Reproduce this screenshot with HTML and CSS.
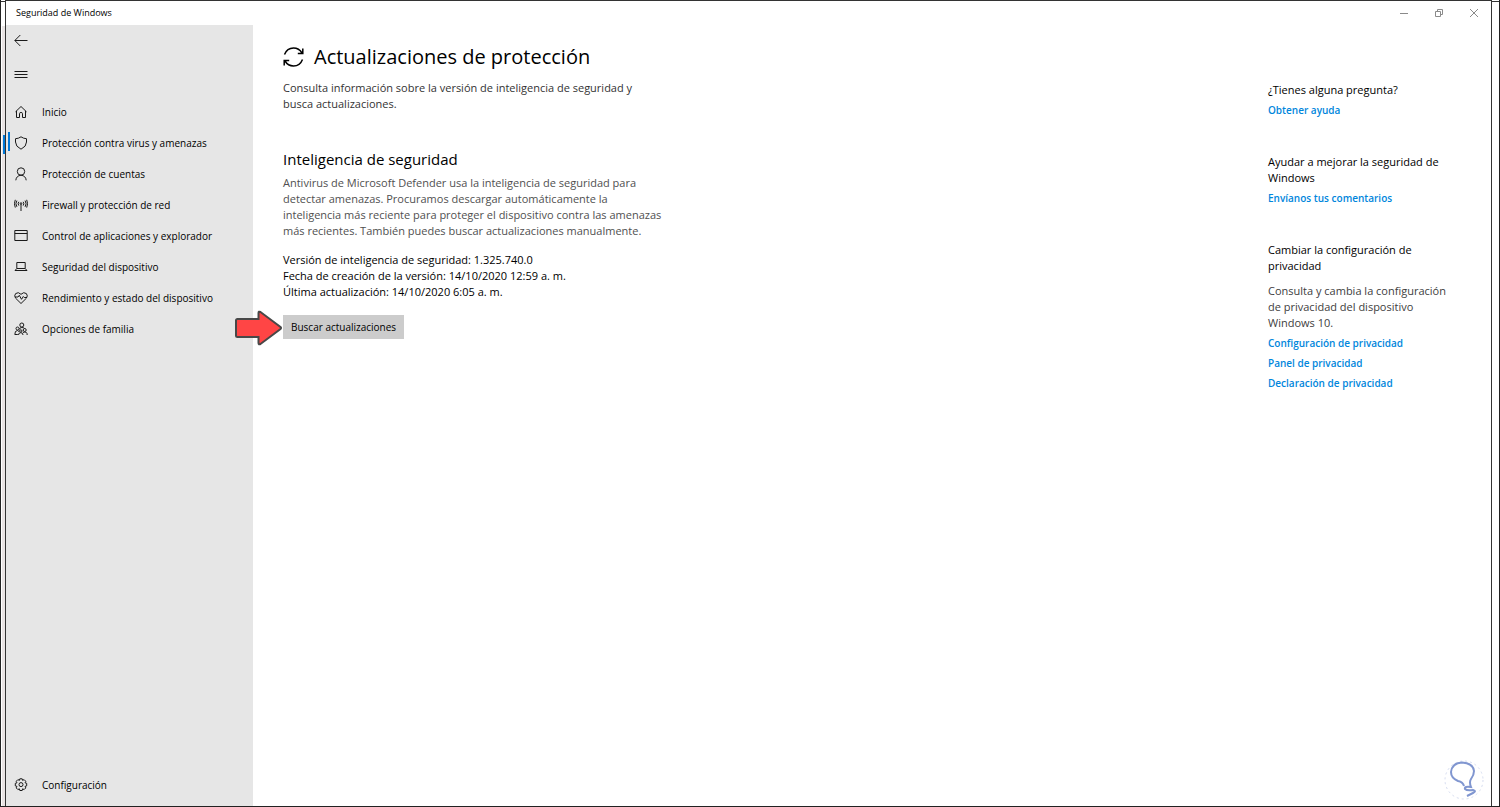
FILE: index.html
```html
<!DOCTYPE html>
<html lang="es">
<head>
    <meta charset="UTF-8">
    <meta name="viewport" content="width=device-width, initial-scale=1.0">
    <title>Seguridad de Windows</title>
    <link rel="stylesheet" href="styles.css">
</head>
<body>
    <div class="backdrop">
        <div class="window">
            <header class="titlebar">
                <span class="app-name">Seguridad de Windows</span>
                <div class="controls">
                    <button type="button" aria-label="Minimizar"><svg width="10" height="10" viewBox="0 0 10 10"><path d="M1 5.5h8"/></svg></button>
                    <button type="button" aria-label="Restaurar"><svg width="10" height="10" viewBox="0 0 10 10"><path d="M1.5 3.5h5v5h-5zM3.5 3.5v-2h5v5h-2"/></svg></button>
                    <button type="button" aria-label="Cerrar"><svg width="10" height="10" viewBox="0 0 10 10"><path d="M1 1l8 8M9 1l-8 8"/></svg></button>
                </div>
            </header>

            <div class="content">
                <aside class="sidebar">
                    <button type="button" class="nav-item" aria-label="Atrás">
                        <svg width="14" height="14" viewBox="0 0 14 14"><path d="M13.5 6.500H1M6.300 1L.8 6.500l5.500 5.500"/></svg>
                    </button>
                    <button type="button" class="nav-item menu" aria-label="Menú">
                        <svg width="14" height="14" viewBox="0 0 14 14"><path d="M.5 3.500h13M.5 6.500h13M.5 9.500h13"/></svg>
                    </button>
                    <nav>
                        <a href="#" class="nav-item">
                            <svg width="14" height="14" viewBox="0 0 14 14"><path d="M1.500 6.800L7 1.500l5.500 5.300M2.500 6v6.500h3v-4q0-1 1.500-1t1.500 1v4h3V6"/></svg>
                            Inicio
                        </a>
                        <a href="#" class="nav-item active">
                            <svg width="14" height="14" viewBox="0 0 14 14"><path d="M7 .8Q9.500 2.600 12.500 2.700V6Q12.500 10.600 7 13.200Q1.500 10.600 1.500 6V2.700Q4.500 2.600 7 .8z"/></svg>
                            Protección contra virus y amenazas
                        </a>
                        <a href="#" class="nav-item">
                            <svg width="14" height="14" viewBox="0 0 14 14"><circle cx="7" cy="4.500" r="3.700"/><path d="M1.800 13.300Q2.300 8.700 7 8.200Q11.700 8.700 12.200 13.300"/></svg>
                            Protección de cuentas
                        </a>
                        <a href="#" class="nav-item">
                            <svg class="thin" width="14" height="14" viewBox="0 0 14 14"><path d="M7 6v7M4.800 3.800q-1.300 1.900 0 3.800M9.200 3.800q1.300 1.900 0 3.800M2.900 2.600q-2 3.100 0 6.200M11.100 2.600q2 3.100 0 6.200M1.300 1.800q-1.800 3.900 0 7.800M12.700 1.800q1.800 3.900 0 7.800"/><circle cx="7" cy="5.500" r=".8"/></svg>
                            Firewall y protección de red
                        </a>
                        <a href="#" class="nav-item">
                            <svg width="14" height="14" viewBox="0 0 14 14"><path d="M.8 1.500h12.400v10H.8zM.8 4.500h12.400"/></svg>
                            Control de aplicaciones y explorador
                        </a>
                        <a href="#" class="nav-item">
                            <svg width="14" height="14" viewBox="0 0 14 14"><path d="M2.800 2.500h8.400v6H2.800zM2.800 8.500L1 10.500h12l-1.800-2"/></svg>
                            Seguridad del dispositivo
                        </a>
                        <a href="#" class="nav-item">
                            <svg width="14" height="14" viewBox="0 0 14 14"><path d="M7 12.500L1.600 7.200Q-.2 4.800 1.600 2.600Q4.300.4 7 3.300Q9.700.4 12.400 2.600Q14.200 4.800 12.400 7.200zM1 6h3l1.300-1.700 2.200 4L9.300 5.500l1 1H13"/></svg>
                            Rendimiento y estado del dispositivo
                        </a>
                        <a href="#" class="nav-item">
                            <svg width="14" height="14" viewBox="0 0 14 14"><circle cx="7.800" cy="3" r="2"/><circle cx="3.500" cy="6.500" r="1.500"/><circle cx="10.700" cy="8" r="1.500"/><circle cx="6.800" cy="9" r="1.200"/><path d="M5.300 7.500Q5.500 5.500 7.800 5.500T10.500 6.500M.8 12.500Q.8 8.500 3.500 8.500L5 9.500M4.500 13Q4.500 10.700 6.800 10.700T9 13M9 10.500Q13.200 8.800 13.200 13M.8 12.500h3"/></svg>
                            Opciones de familia
                        </a>
                    </nav>
                    <a href="#" class="nav-item settings">
                        <svg width="14" height="14" viewBox="0 0 14 14"><path d="M5.800.8h2.400l.4 1.600 1.500-.8 1.700 1.700-.8 1.500 1.700.5v2.600l-1.700.5.8 1.500-1.700 1.700-1.500-.8-.4 1.700H5.800l-.4-1.700-1.500.8-1.700-1.700.8-1.500-1.700-.5V5.300L3 4.800l-.8-1.500 1.700-1.700 1.500.8z"/><circle cx="7" cy="6.600" r="2"/></svg>
                        Configuración
                    </a>
                </aside>

                <main>
                    <h1>
                        <svg width="21" height="21" viewBox="0 0 21 21"><path d="M1.500 7.500Q4 1 10.500 1Q16 1 19 6M19.800 1.500v5h-5M19.500 12.500Q17 19 10.500 19Q5 19 2 14M1.200 18.500v-5h5"/></svg>
                        Actualizaciones de protección
                    </h1>
                    <p class="intro">Consulta información sobre la versión de inteligencia de seguridad y<br>busca actualizaciones.</p>

                    <h2>Inteligencia de seguridad</h2>
                    <p class="description">Antivirus de Microsoft Defender usa la inteligencia de seguridad para<br>detectar amenazas. Procuramos descargar automáticamente la<br>inteligencia más reciente para proteger el dispositivo contra las amenazas<br>más recientes. También puedes buscar actualizaciones manualmente.</p>
                    <p class="version">Versión de inteligencia de seguridad: 1.325.740.0<br>Fecha de creación de la versión: 14/10/2020 12:59 a. m.<br>Última actualización: 14/10/2020 6:05 a. m.</p>

                    <div class="action">
                        <svg class="arrow" width="48" height="36" viewBox="0 0 48 36"><path d="M2.500 9H23.500V3Q23.500 1 25.500 2L45.500 17Q46.500 18 45.500 19L25.500 34Q23.500 35 23.500 33V27H2.500Q1 27 1 25.500V10.500Q1 9 2.500 9z"/></svg>
                        <button type="button" class="update">Buscar actualizaciones</button>
                    </div>
                </main>

                <aside class="help">
                    <section>
                        <h3>¿Tienes alguna pregunta?</h3>
                        <a href="#">Obtener ayuda</a>
                    </section>
                    <section>
                        <h3>Ayudar a mejorar la seguridad de<br>Windows</h3>
                        <a href="#">Envíanos tus comentarios</a>
                    </section>
                    <section>
                        <h3>Cambiar la configuración de<br>privacidad</h3>
                        <p>Consulta y cambia la configuración<br>de privacidad del dispositivo<br>Windows 10.</p>
                        <a href="#">Configuración de privacidad</a>
                        <a href="#">Panel de privacidad</a>
                        <a href="#">Declaración de privacidad</a>
                    </section>
                </aside>
            </div>

            <svg class="logo" width="42" height="42" viewBox="0 0 42 42">
                <circle class="ring" cx="20" cy="21" r="19"/>
                <path d="M20 27Q19 23 14 22Q7 19 7 13Q8 4 18 3.500Q29 4 30 12Q30 16 27 20Q25 23 27 28Q20 27 21 30Q23 32 29 31Q33 32 29 34L23 37"/>
            </svg>
        </div>
    </div>
</body>
</html>
```

FILE: styles.css
```css
* {
    box-sizing: border-box;
}
body {
    margin: 0;
    background-color: #ffffff;
    color: #000000;
    font-family: "Segoe UI", "Open Sans", sans-serif;
    font-size: 11px;
    line-height: 16px;
}
h1, h2, h3, p {
    margin: 0;
    font-size: 11px;
    font-weight: 400;
}
button {
    border: none;
    background: none;
    color: inherit;
    font: inherit;
}
a {
    color: inherit;
    text-decoration: none;
}
svg {
    flex: none;
    fill: none;
    stroke: #1a1a1a;
    stroke-width: 1;
}

/* window left open behind the main one */
.backdrop {
    position: relative;
    min-height: 100vh;
    padding: 0 7px 0 4px;
    border: 1px solid #222222;
    border-top: none;
    background: linear-gradient(#333333, #333333) 0 1px / 100% 1px no-repeat,
        linear-gradient(#e9e4e4, #e9e4e4) 1px 26px / 3px 100% no-repeat;
    display: flex;
}
.backdrop::before {
    content: "";
    position: absolute;
    left: 2px;
    top: 135px;
    width: 2px;
    height: 19px;
    background-color: #0078d7;
}
.window {
    position: relative;
    flex: 1;
    display: flex;
    flex-direction: column;
    border: 1px solid #333333;
    border-bottom: none;
    background-color: #ffffff;
}

.titlebar {
    display: flex;
    justify-content: space-between;
    align-items: center;
    height: 24px;
    padding-left: 10px;
    font-size: 9px;
}
.controls {
    display: flex;
}
.controls button {
    display: flex;
    justify-content: center;
    align-items: center;
    width: 35px;
    height: 24px;
    padding: 0;
}
.controls svg {
    stroke: #8a8a8a;
}

.content {
    flex: 1;
    display: flex;
}
.sidebar {
    flex: none;
    display: flex;
    flex-direction: column;
    width: 247px;
    padding-bottom: 6px;
    background-color: #e6e6e6;
    font-size: 10px;
    font-weight: 500;
}
.nav-item {
    position: relative;
    display: flex;
    align-items: center;
    gap: 14px;
    height: 31px;
    padding: 0 8px;
}
.menu {
    margin: 3px 0 6px;
}
.active::before {
    content: "";
    position: absolute;
    left: 2px;
    top: 5px;
    width: 2px;
    height: 19px;
    background-color: #0078d7;
}
.settings {
    margin-top: auto;
}

main {
    flex: 1;
    padding: 16px 30px;
}
h1 {
    display: flex;
    align-items: center;
    gap: 10px;
    font-size: 20px;
    line-height: 32px;
}
h1 svg {
    stroke: #000000;
    stroke-width: 1.5;
}
.intro {
    margin-top: 7px;
    color: #333333;
}
h2 {
    margin-top: 37px;
    font-size: 15px;
    line-height: 20px;
}
.description {
    margin-top: 6px;
    color: #505050;
}
.version {
    margin-top: 13px;
}
.action {
    position: relative;
    margin-top: 15px;
}
.update {
    height: 24px;
    padding: 0 8px;
    background-color: #cccccc;
    font-size: 10px;
    font-weight: 500;
}
.arrow {
    position: absolute;
    left: -48px;
    top: -5px;
    fill: #ff4545;
    stroke: #484848;
    stroke-width: 2;
}

.help {
    flex: none;
    width: 223px;
    padding-top: 57px;
}
.help section {
    margin-bottom: 36px;
}
.help p {
    margin-top: 9px;
    color: #404040;
}
.help a {
    display: block;
    margin-top: 4px;
    color: #0086dc;
    font-size: 10px;
    font-weight: 600;
}

.logo {
    position: absolute;
    right: 5px;
    bottom: 5px;
    stroke: #8096d0;
    stroke-width: 2;
}
.logo .ring {
    stroke: #d5dcf0;
    stroke-width: 1;
    stroke-dasharray: 2 3;
}
```
